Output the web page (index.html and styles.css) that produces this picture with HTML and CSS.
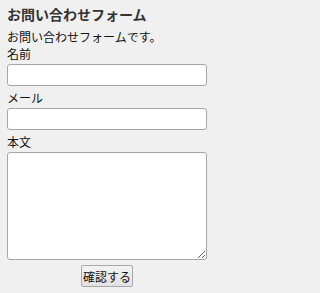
FILE: index.html
```html
<!DOCTYPE html>
<html lang="ja">
<head>
<meta charset="utf-8">
<title>お問い合わせフォーム</title>
<link rel="stylesheet" href="styles.css">
</head>
<body>
<main class="page">
  <h1 class="title">お問い合わせフォーム</h1>
  <p class="lead">お問い合わせフォームです。</p>
  <form class="form">
    <label class="label label-first" for="name">名前</label>
    <input class="field" id="name" type="text">
    <label class="label" for="mail">メール</label>
    <input class="field" id="mail" type="email">
    <label class="label" for="body">本文</label>
    <textarea class="field area" id="body"></textarea>
    <div class="actions">
      <button class="btn" type="button">確認する</button>
    </div>
  </form>
</main>
</body>
</html>
```

FILE: styles.css
```css
html, body {
  margin: 0;
  padding: 0;
  background: #f0f0f0;
}
body {
  font-family: "Noto Sans CJK JP", "Noto Sans", sans-serif;
  color: #111;
  font-size: 12px;
}
.page {
  padding: 0 7px;
  width: 200px;
}
.title {
  margin: 5px 0 0;
  font-size: 14px;
  line-height: 18px;
  font-weight: bold;
  color: #333;
}
.lead {
  margin: 6px 0 0;
  line-height: 16px;
}
.form {
  display: flex;
  flex-direction: column;
}
.label {
  display: block;
  line-height: 16px;
  margin: 4px 0 2px;
}
.label-first {
  margin-top: 1px;
}
.field {
  box-sizing: border-box;
  width: 200px;
  height: 22px;
  margin: 0;
  border: 1px solid #a6a6a6;
  border-radius: 3px;
  background: #fff;
  font: inherit;
}
.area {
  height: 108px;
}
.actions {
  display: flex;
  justify-content: center;
  margin-top: 5px;
}
.btn {
  box-sizing: border-box;
  height: 22px;
  width: 52px;
  padding: 0;
  font: inherit;
  font-size: 12px;
  color: #111;
  background: linear-gradient(#f3f3f3, #e2e2e2);
  border: 1px solid #a8a8a8;
  border-radius: 2px;
}
```
